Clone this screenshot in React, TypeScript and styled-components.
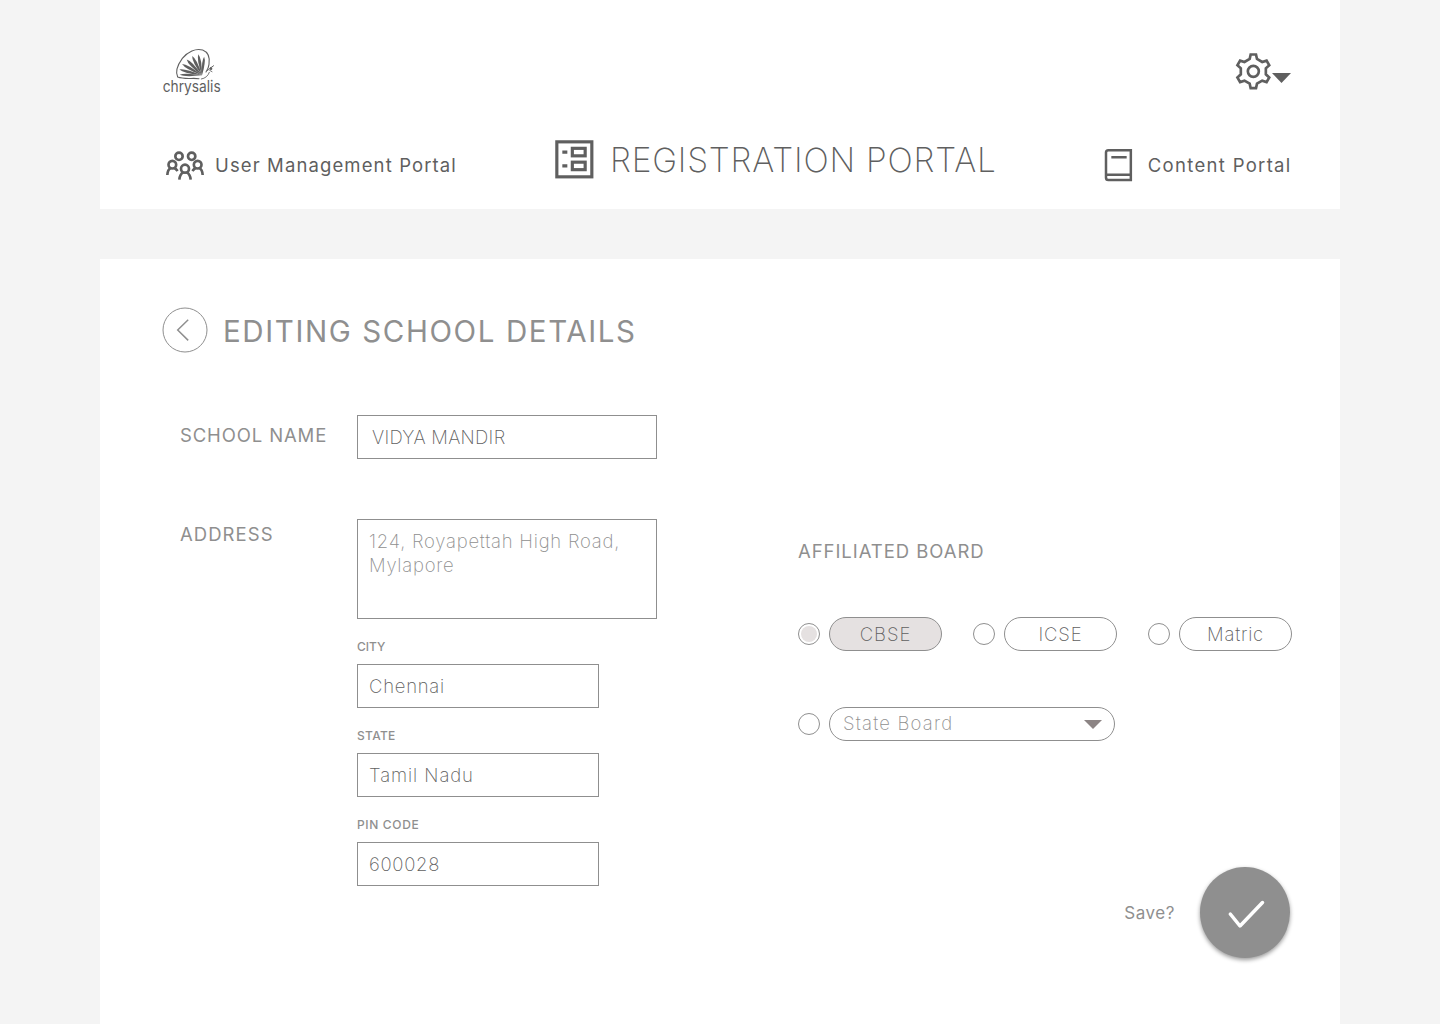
import React, { useState } from "react";
import styled, { createGlobalStyle } from "styled-components";

const ink = "#5f5f5f";
const muted = "#8f8f8f";

const GlobalStyle = createGlobalStyle`
  *, *::before, *::after { box-sizing: border-box; }
  body { margin: 0; background: #f4f4f4; overflow: hidden; }
  button { padding: 0; border: 0; background: none; font: inherit; color: inherit; cursor: pointer; }
  svg { display: block; flex: none; overflow: visible; }
`;

const Page = styled.div`
  width: 1240px;
  height: 1024px;
  margin: 0 auto;
  display: flex;
  flex-direction: column;
  gap: 50px;
  font-family: Inter, "Open Sans", sans-serif;
  color: ${ink};
`;

const Header = styled.header`
  height: 209px;
  flex: none;
  padding: 47px 48px 0 62px;
  background: #fff;
`;

const TopBar = styled.div`
  display: flex;
  justify-content: space-between;
  height: 49px;
`;

const SettingsButton = styled.button`
  display: flex;
  align-items: flex-start;
  height: 49px;

  svg:first-child { margin-top: 6px; }
  svg:last-child { margin: 26px 1px 0 0; }
`;

const Nav = styled.nav`
  display: flex;
  align-items: center;
  height: 40px;
  margin: 44px 0 0 4px;
`;

const NavItem = styled.a<{ $gap: number; $push?: number }>`
  display: flex;
  align-items: center;
  gap: ${(p) => p.$gap}px;
  height: 24px;
  margin: 11px 0 0 ${(p) => p.$push ?? 0}px;
  white-space: nowrap;
`;

const ActiveNavItem = styled(NavItem)`
  height: 40px;
  margin-top: 0;

  svg { margin-bottom: 1px; }
`;

const NavLabel = styled.span<{ $spacing: number }>`
  margin-bottom: 2px;
  font-size: 18.5px;
  line-height: 24px;
  font-weight: 370;
  letter-spacing: ${(p) => p.$spacing}px;
`;

const ActiveLabel = styled.span`
  font-size: 33.5px;
  line-height: 40px;
  font-weight: 220;
  letter-spacing: 0.8px;
`;

const Main = styled.main`
  flex: 1;
  padding: 48px 48px 0 62px;
  background: #fff;
  color: ${muted};
`;

const TitleRow = styled.div`
  display: flex;
  align-items: center;
  gap: 15px;
  height: 46px;
`;

const Title = styled.h1`
  margin: 2px 0 0;
  font-size: 29.5px;
  line-height: 36px;
  font-weight: 390;
  letter-spacing: 1.6px;
`;

const Form = styled.div`
  display: flex;
  gap: 141px;
  margin: 62px 0 0 18px;
`;

const Fields = styled.div`
  display: grid;
  grid-template-columns: 177px 300px;
  row-gap: 60px;
  align-content: start;
`;

const Label = styled.span<{ $top?: number; $spacing: number }>`
  padding-top: ${(p) => p.$top ?? 0}px;
  font-size: 18.5px;
  line-height: 24px;
  font-weight: 380;
  letter-spacing: ${(p) => p.$spacing}px;
  white-space: nowrap;
`;

const Box = styled.div<{ $spacing: number; $indent?: number }>`
  height: 44px;
  padding: 9px 0 0 ${(p) => p.$indent ?? 11}px;
  border: 1px solid ${muted};
  color: ${ink};
  font-size: 18.5px;
  line-height: 24px;
  font-weight: 250;
  letter-spacing: ${(p) => p.$spacing}px;
  white-space: nowrap;
`;

const AddressBox = styled(Box)`
  height: 100px;
  color: ${muted};
`;

const SubField = styled.div`
  width: 242px;
  padding-top: 20px;
`;

const SubLabel = styled.div<{ $spacing: number }>`
  margin-bottom: 9px;
  font-size: 12px;
  line-height: 16px;
  font-weight: 450;
  letter-spacing: ${(p) => p.$spacing}px;
`;

const Board = styled.section`
  display: flex;
  flex-direction: column;
  width: 494px;
  padding-top: 124px;
`;

const Options = styled.div`
  display: flex;
  gap: 31px;
  margin-top: 54px;

  & + & { margin-top: 56px; }
`;

const Option = styled.label`
  display: flex;
  align-items: center;
  gap: 9px;
  cursor: pointer;
`;

const Radio = styled.input`
  appearance: none;
  width: 22px;
  height: 22px;
  margin: 0;
  padding: 2px;
  border: 1px solid ${muted};
  border-radius: 50%;
  background: #fff content-box;

  &:checked { background-color: #e5e1e1; background-clip: content-box; }
`;

const Pill = styled.span<{ $on: boolean; $spacing: number }>`
  display: flex;
  justify-content: center;
  width: 113px;
  height: 34px;
  padding: 4px 0 0 0;
  border: 1px solid ${muted};
  border-radius: 17px;
  background: ${(p) => (p.$on ? "#e5e1e1" : "#fff")};
  color: ${ink};
  font-size: 18.5px;
  line-height: 24px;
  font-weight: 250;
  letter-spacing: ${(p) => p.$spacing}px;
`;

const SelectPill = styled(Pill)`
  width: 286px;
  justify-content: space-between;
  padding: 3px 12px 0 13px;
  color: ${muted};

  svg { margin-top: 9px; }
`;

const SaveRow = styled.div`
  display: flex;
  justify-content: flex-end;
  align-items: center;
  gap: 25px;
  margin: 126px 2px 0 0;
`;

const SaveLabel = styled.span`
  font-size: 17px;
  line-height: 24px;
  font-weight: 370;
  letter-spacing: 0.55px;
`;

const SaveButton = styled.button`
  display: grid;
  place-items: center;
  width: 90px;
  height: 91px;
  padding: 2px 0 0 1px;
  border-radius: 50%;
  background: ${muted};
  box-shadow: 0 2px 4px rgba(0, 0, 0, 0.4);
`;

const leaves: [number, number, number][] = [
  [83, 119, 7], [82, 102, 8], [91, 84, 8.5], [106, 69, 9], [124, 58, 9], [144, 52, 8.5], [163, 60, 7.5],
];

function leafPath([x, y, w]: [number, number, number]) {
  const bx = 156, by = 121;
  const dx = x - bx, dy = y - by;
  const len = Math.hypot(dx, dy);
  const nx = (-dy / len) * w, ny = (dx / len) * w;
  const sx = x - dx * 0.08, sy = y - dy * 0.08;
  const mx = bx + dx * 0.72, my = by + dy * 0.72;
  return `M${bx} ${by}Q${mx + nx} ${my + ny} ${sx} ${sy}Q${mx - nx} ${my - ny} ${bx} ${by}Z`;
}

const Logo = () => (
  <svg width="64" height="54" viewBox="36 36 192 162" aria-label="chrysalis">
    <g fill="none" stroke={ink} strokeWidth="3.2" strokeLinecap="round">
      <path d="M147 131C128 128 104 134 83 126C76 111 84 88 97 70C113 50 137 39 158 45C176 52 180 69 177 88C176 98 172 105 168 111" />
      <path d="M154 132C166 130 174 123 178 112M172 107L181 99M181 99L187 95M179 106L186 110M187 95L191 92" strokeWidth="2.6" />
    </g>
    <g fill={ink}>
      {leaves.map((l) => <path key={l[0]} d={leafPath(l)} />)}
      <circle cx="183" cy="101" r="4" />
    </g>
    <text x="38" y="170" textLength="174" lengthAdjust="spacingAndGlyphs" fill={ink} fontFamily="Inter" fontWeight="430" fontSize="46">chrysalis</text>
  </svg>
);

const gearPath =
  [0, 60, 120, 180, 240, 300]
    .flatMap((deg) => {
      const a = (deg * Math.PI) / 180;
      return [[-11, 37], [-8, 50.5], [8, 50.5], [11, 37]].map(
        ([u, r]) => `${(u * Math.cos(a) + r * Math.sin(a)).toFixed(2)} ${(u * Math.sin(a) - r * Math.cos(a)).toFixed(2)}`
      );
    })
    .map((p, i) => (i ? "L" : "M") + p)
    .join("") + "Z";

const GearIcon = () => (
  <svg width="37" height="37" viewBox="-55 -55 111 111" fill="none" stroke={ink} strokeWidth="8">
    <path d={gearPath} />
    <circle r="16.500" />
  </svg>
);

const UsersIcon = () => (
  <svg width="39" height="30" viewBox="32 61 117 90" fill="none" stroke={ink} strokeWidth="8">
    <circle cx="71" cy="77" r="11" />
    <circle cx="109" cy="77" r="11" />
    <circle cx="51" cy="102" r="11.5" />
    <circle cx="127" cy="102" r="11.5" />
    <circle cx="89" cy="114" r="12" />
    <path d="M36 133C36.500 123 40 115 47 111M56 111Q62 115 67 121M142 133C141.500 123 138 115 131 111M122 111Q116 115 111 121M72 147C73 136 77 129 84 124.500M106 147C105 136 101 129 94 124.500" />
  </svg>
);

const BallotIcon = () => (
  <svg width="39" height="39" viewBox="31 31 117 117" fill="none" stroke={ink} strokeWidth="9.5">
    <rect x="36.500" y="36.500" width="105" height="105" />
    <rect x="83" y="56" width="38.500" height="22.500" />
    <rect x="83" y="97.500" width="38.500" height="22.500" />
    <path d="M53 67.500H68M53 108.500H68" />
  </svg>
);

const BookIcon = () => (
  <svg width="29" height="36" viewBox="41 38 87 108" fill="none" stroke={ink} strokeWidth="7.5">
    <path d="M121.500 44.500H54Q47 44.500 47 51.500V127Q47 134 54 134H121.500ZM47 118.500H121.500M63 65.500H109" />
  </svg>
);

const Caret = ({ color, width, height }: { color: string; width: number; height: number }) => (
  <svg width={width} height={height} viewBox="0 0 18 10" preserveAspectRatio="none">
    <path d="M0 0H18L9 10Z" fill={color} />
  </svg>
);

const BackIcon = () => (
  <svg width="46" height="46" viewBox="0 0 46 46" fill="none" stroke={muted}>
    <circle cx="23" cy="23" r="22" strokeWidth="1" />
    <path d="M26.200 12.800L15.700 23L26.200 33.400" strokeWidth="1.500" />
  </svg>
);

const CheckIcon = () => (
  <svg width="38" height="30" viewBox="0 0 38 30" fill="none" stroke="#fff" strokeWidth="3.500" strokeLinecap="round" strokeLinejoin="round">
    <path d="M3.300 15L13 27L35.500 3.500" />
  </svg>
);

const boards = [
  { name: "CBSE", spacing: 0.95 },
  { name: "ICSE", spacing: 0.85 },
  { name: "Matric", spacing: 0.8 },
];

export default function App() {
  const [board, setBoard] = useState("CBSE");
  return (
    <>
      <GlobalStyle />
      <Page>
        <Header>
          <TopBar>
            <Logo />
            <SettingsButton aria-label="Settings">
              <GearIcon />
              <Caret color={ink} width={19} height={10} />
            </SettingsButton>
          </TopBar>
          <Nav>
            <NavItem $gap={10}>
              <UsersIcon />
              <NavLabel $spacing={1.12}>User Management Portal</NavLabel>
            </NavItem>
            <ActiveNavItem $gap={16} $push={98}>
              <BallotIcon />
              <ActiveLabel>REGISTRATION PORTAL</ActiveLabel>
            </ActiveNavItem>
            <NavItem $gap={15} $push={107}>
              <BookIcon />
              <NavLabel $spacing={1.32}>Content Portal</NavLabel>
            </NavItem>
          </Nav>
        </Header>
        <Main>
          <TitleRow>
            <button aria-label="Back"><BackIcon /></button>
            <Title>EDITING SCHOOL DETAILS</Title>
          </TitleRow>
          <Form>
            <Fields>
              <Label $top={8} $spacing={0.87}>SCHOOL NAME</Label>
              <Box $spacing={0.29} $indent={14}>VIDYA MANDIR</Box>
              <Label $top={3} $spacing={1.05}>ADDRESS</Label>
              <div>
                <AddressBox $spacing={0.76}>
                  124, Royapettah High Road,<br />Mylapore
                </AddressBox>
                <SubField>
                  <SubLabel $spacing={0}>CITY</SubLabel>
                  <Box $spacing={0.75}>Chennai</Box>
                </SubField>
                <SubField>
                  <SubLabel $spacing={0.3}>STATE</SubLabel>
                  <Box $spacing={0.92}>Tamil Nadu</Box>
                </SubField>
                <SubField>
                  <SubLabel $spacing={0.65}>PIN CODE</SubLabel>
                  <Box $spacing={0.7}>600028</Box>
                </SubField>
              </div>
            </Fields>
            <Board>
              <Label $spacing={0.95}>AFFILIATED BOARD</Label>
              <Options>
                {boards.map((b) => (
                  <Option key={b.name}>
                    <Radio type="radio" name="board" checked={board === b.name} onChange={() => setBoard(b.name)} />
                    <Pill $on={board === b.name} $spacing={b.spacing}>{b.name}</Pill>
                  </Option>
                ))}
              </Options>
              <Options>
                <Option>
                  <Radio type="radio" name="board" checked={board === "State"} onChange={() => setBoard("State")} />
                  <SelectPill $on={false} $spacing={1.2}>
                    State Board
                    <Caret color="#8c8484" width={18} height={9} />
                  </SelectPill>
                </Option>
              </Options>
              <SaveRow>
                <SaveLabel>Save?</SaveLabel>
                <SaveButton aria-label="Save"><CheckIcon /></SaveButton>
              </SaveRow>
            </Board>
          </Form>
        </Main>
      </Page>
    </>
  );
}
